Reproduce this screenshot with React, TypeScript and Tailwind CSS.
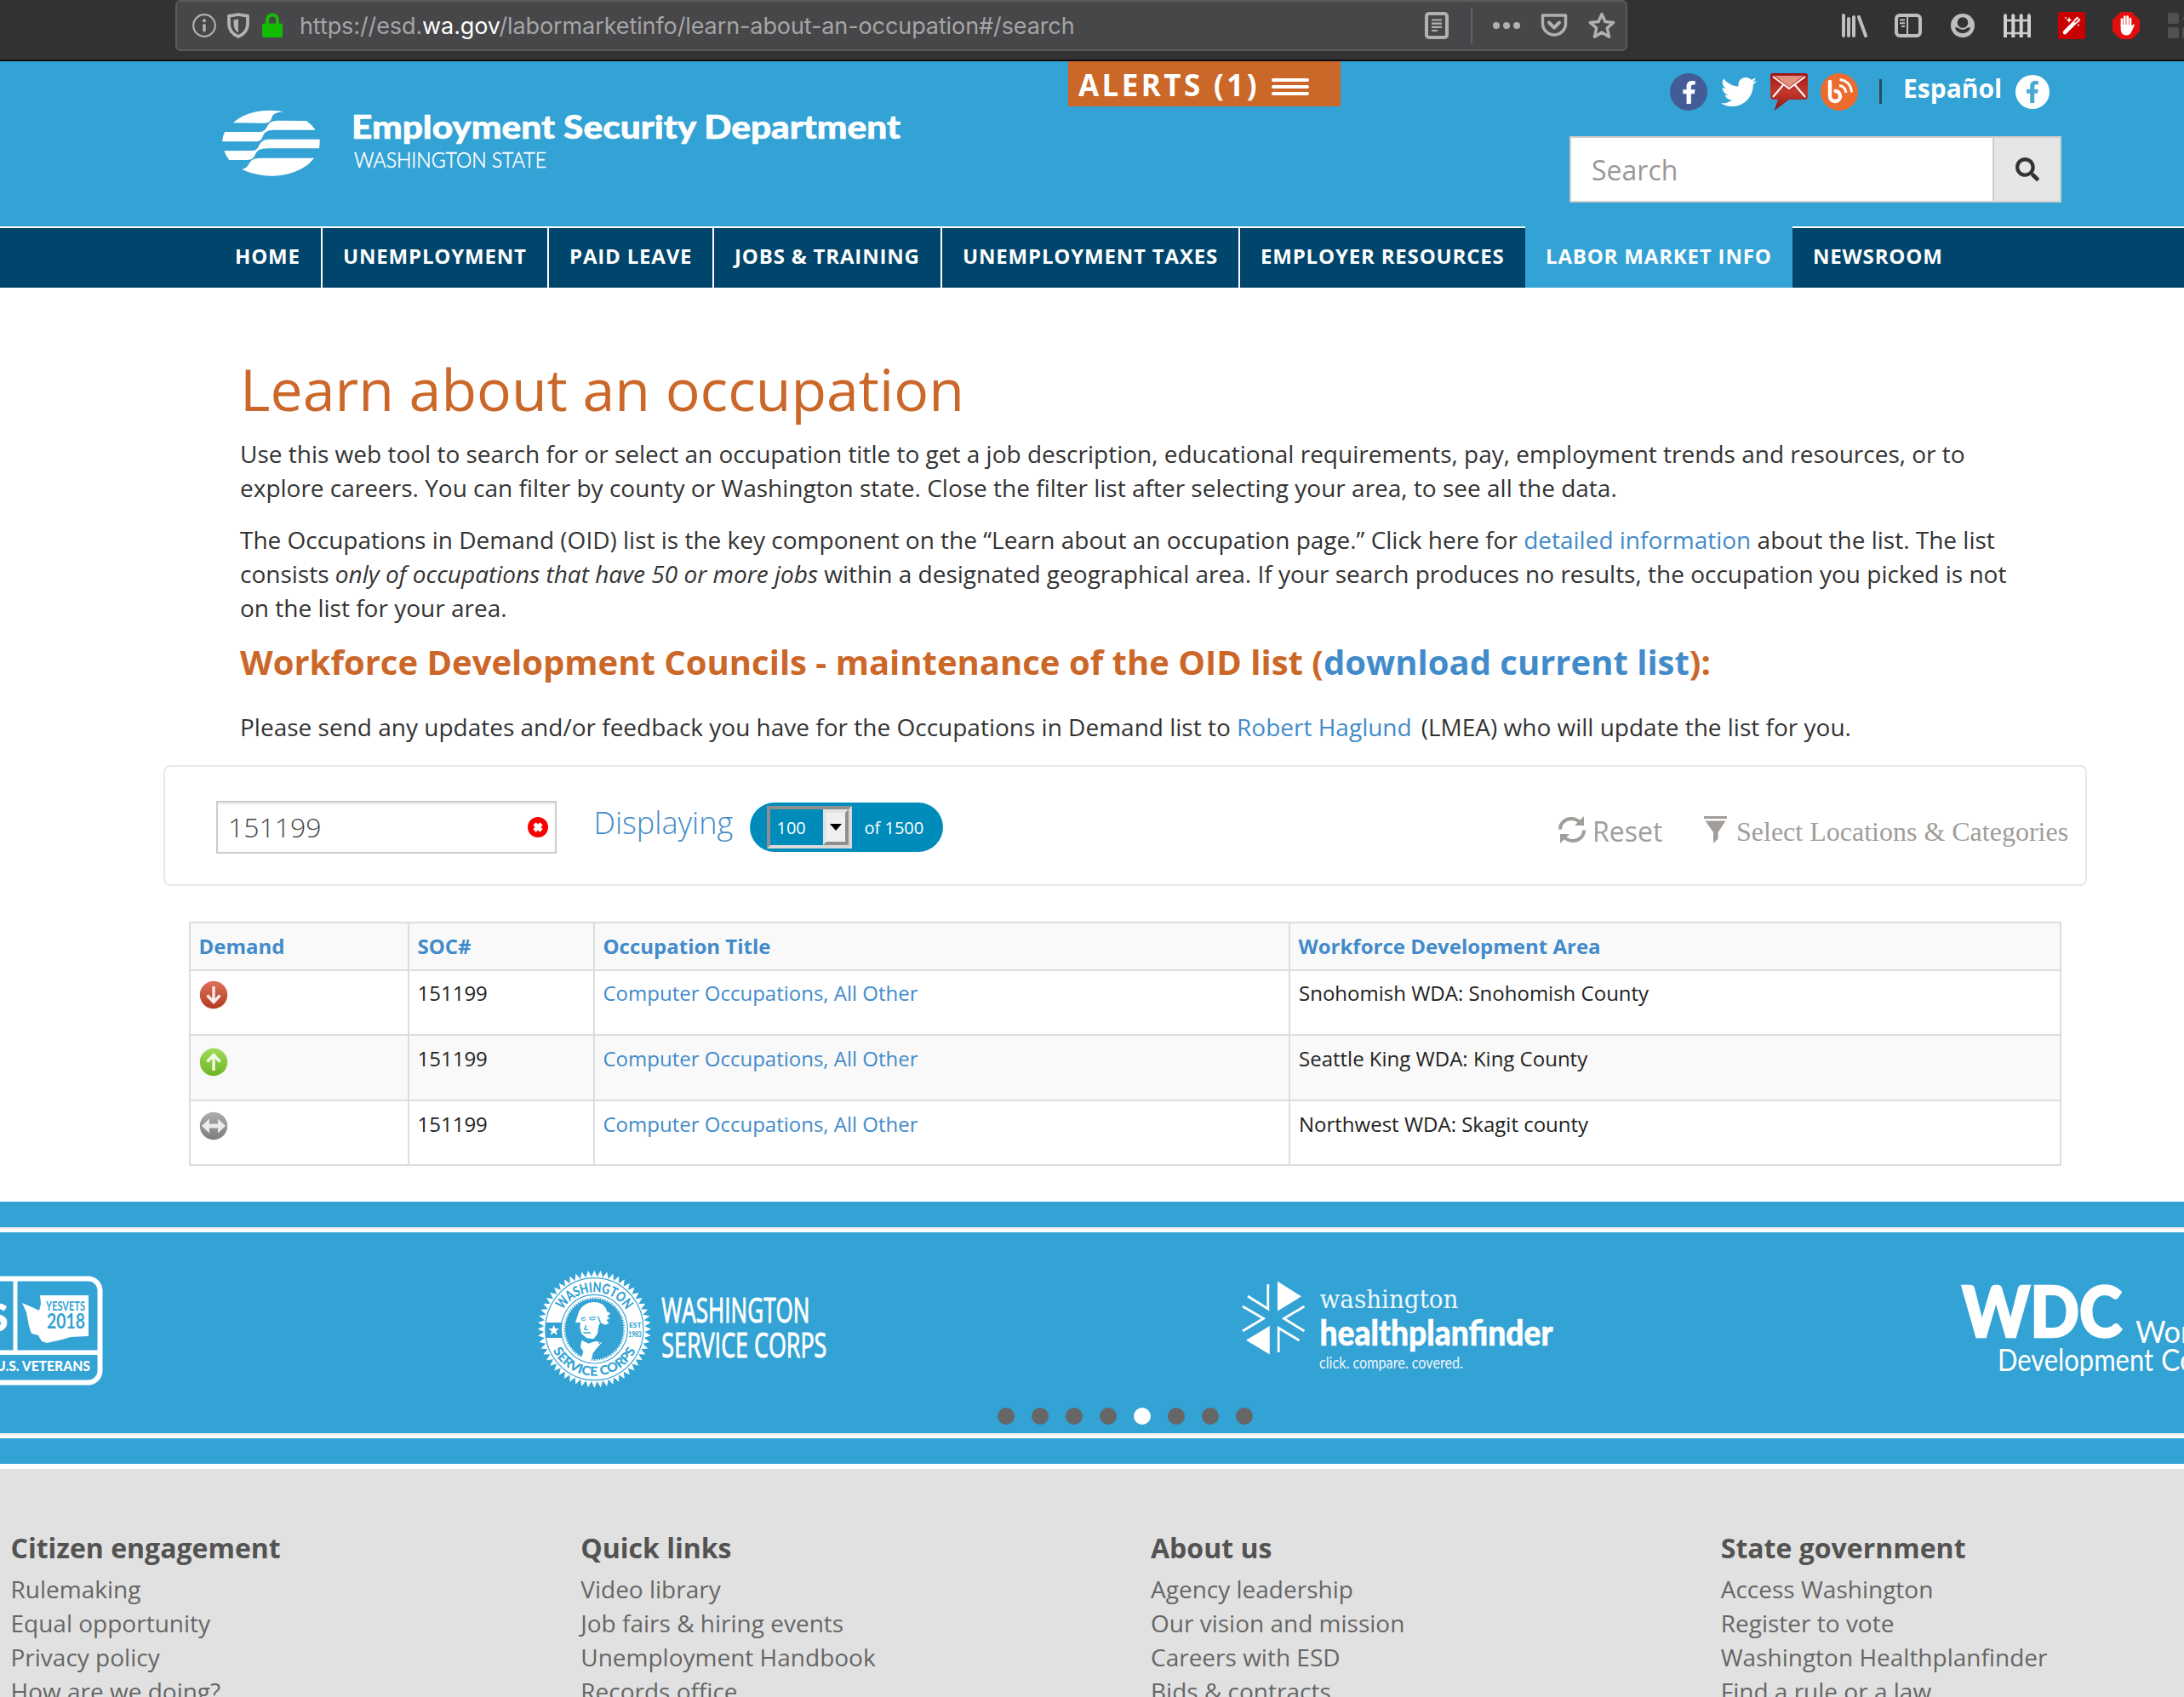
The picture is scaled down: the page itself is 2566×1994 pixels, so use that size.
import React from "react";
import { FaFacebookF, FaTwitter, FaSearch } from "react-icons/fa";

const navItems = ["HOME", "UNEMPLOYMENT", "PAID LEAVE", "JOBS & TRAINING", "UNEMPLOYMENT TAXES", "EMPLOYER RESOURCES", "LABOR MARKET INFO", "NEWSROOM"];
const navWidths = [
  "w-[127px] pl-[24px]",
  "w-[266px] pl-[24px]",
  "w-[194px] pl-[24px]",
  "w-[268px] pl-[24px]",
  "w-[350px] pl-[24px]",
  "w-[335px] pl-[24px]",
  "w-[314px] pl-[24px]",
  "w-[240px] pl-[24px]",
];

const footerColumns = [
  { title: "Citizen engagement", links: ["Rulemaking", "Equal opportunity", "Privacy policy", "How are we doing?"] },
  { title: "Quick links", links: ["Video library", "Job fairs & hiring events", "Unemployment Handbook", "Records office"] },
  { title: "About us", links: ["Agency leadership", "Our vision and mission", "Careers with ESD", "Bids & contracts"] },
  { title: "State government", links: ["Access Washington", "Register to vote", "Washington Healthplanfinder", "Find a rule or a law"] },
];

const rows = [
  { demand: "down", area: "Snohomish WDA: Snohomish County" },
  { demand: "up", area: "Seattle King WDA: King County" },
  { demand: "flat", area: "Northwest WDA: Skagit county" },
];

function BrowserBar() {
  return (
    <div className="flex h-[72px] w-full shrink-0 items-start overflow-hidden border-b-2 border-[#0c0c0d] bg-[#323234] pl-[206px]">
      <div className="flex h-[60px] w-[1706px] shrink-0 items-center rounded-[6px] border-2 border-[#5b5b5d] bg-[#474749] pl-[18px] font-['Inter',sans-serif] text-[27px]">
        <svg width="28" height="28" viewBox="0 0 28 28" className="shrink-0">
          <circle cx="14" cy="14" r="12.8" fill="none" stroke="#b1b1b3" strokeWidth="2.2" />
          <circle cx="14" cy="8.3" r="2" fill="#b1b1b3" />
          <rect x="12.2" y="12" width="3.6" height="9.5" rx="1.8" fill="#b1b1b3" />
        </svg>
        <svg width="28" height="32" viewBox="0 0 28 32" className="ml-[12px] shrink-0">
          <path d="M14 3c4 1 7 1.400 11 1.600V14c0 7-4 12-11 15C7 26 3 21 3 14V4.600C7 4.400 10 4 14 3Z" fill="none" stroke="#b1b1b3" strokeWidth="3.800" strokeLinejoin="round" />
          <path d="M14 8.500c-2 .5-4 .8-5.500 1V14c0 5 2 8 5.500 10.500Z" fill="#b1b1b3" />
        </svg>
        <svg width="26" height="30" viewBox="0 0 26 30" className="ml-[13px] shrink-0">
          <path d="M7 14V8.500a6 6 0 0 1 12 0V14" fill="none" stroke="#12bc00" strokeWidth="4" />
          <rect x="1" y="12.500" width="24" height="16.500" rx="2.500" fill="#12bc00" />
        </svg>
        <div className="ml-[19px] mt-[3px] w-[1322px] shrink-0 whitespace-nowrap tracking-[-0.1px] text-[#a5a5a7]">
          https://esd.<span className="text-white">wa.gov</span>/labormarketinfo/learn-about-an-occupation#/search
        </div>
        <svg width="28" height="32" viewBox="0 0 28 32" className="shrink-0" fill="none" stroke="#b1b1b3">
          <rect x="2" y="2" width="24" height="28" rx="3" strokeWidth="4" />
          <path d="M8 9.500h12M8 13.700h12M8 17.900h12M8 22h7" strokeWidth="2.200" />
        </svg>
        <div className="ml-[26px] h-[42px] w-[2px] shrink-0 bg-[#5f6168]" />
        <svg width="32" height="10" viewBox="0 0 32 10" className="ml-[24px] shrink-0" fill="#b1b1b3">
          <circle cx="4" cy="5" r="4" />
          <circle cx="16" cy="5" r="4" />
          <circle cx="28" cy="5" r="4" />
        </svg>
        <svg width="32" height="30" viewBox="0 0 32 30" className="ml-[24px] shrink-0" fill="none" stroke="#b1b1b3" strokeWidth="4" strokeLinecap="round" strokeLinejoin="round">
          <path d="M2.500 3h27v9.500a13.500 13.500 0 0 1-27 0Z" strokeWidth="3.500" />
          <path d="M10 11.500l6 6 6-6" />
        </svg>
        <svg width="32" height="32" viewBox="0 0 32 32" className="ml-[24px] shrink-0" fill="none" stroke="#b1b1b3" strokeWidth="3.400" strokeLinejoin="round">
          <path d="M16 2.500l3.900 9 9.800.9-7.400 6.500 2.200 10.300L16 24l-8.500 5.200 2.200-10.300-7.400-6.500 9.800-.9Z" />
        </svg>
      </div>
      <div className="flex h-[60px] shrink-0 items-center">
        <svg width="32" height="28" viewBox="0 0 32 28" className="ml-[252px] shrink-0" stroke="#bebebe" strokeWidth="4" strokeLinecap="round">
          <path d="M2 2v24M8 6v20M14 4v22M20 4l8 22" />
        </svg>
        <svg width="32" height="28" viewBox="0 0 32 28" className="ml-[30px] shrink-0" fill="none" stroke="#bebebe">
          <rect x="2" y="2" width="28" height="24" rx="4" strokeWidth="4" />
          <path d="M15 3v22M6 7.500h6M6 11.200h6M8 15h4" strokeWidth="2" />
        </svg>
        <svg width="28" height="28" viewBox="0 0 28 28" className="ml-[34px] shrink-0">
          <circle cx="14" cy="14" r="14" fill="#bebebe" />
          <circle cx="14" cy="10.500" r="6.300" fill="#323234" />
          <path d="M5 16.500c2-.6 3.500.2 5 1.200 2.500 1.300 5.500 1.300 8 0 1.500-1 3-1.800 5-1.200-1 4-4.500 6.500-9 6.500s-8-2.500-9-6.500Z" fill="#323234" />
        </svg>
        <svg width="32" height="28" viewBox="0 0 32 28" className="ml-[34px] shrink-0" stroke="#cfcfcf" fill="none">
          <path d="M2 28V3M11.300 28V3M20.700 28V3M30 28V3" strokeWidth="4" />
          <path d="M0 3l2-3 2 3M9.300 3l2-3 2 3M18.700 3l2-3 2 3M28 3l2-3 2 3" strokeWidth="1" fill="#cfcfcf" />
          <path d="M0 8h32M0 23h32" strokeWidth="2.400" />
        </svg>
        <svg width="32" height="32" viewBox="0 0 32 32" className="ml-[32px] shrink-0">
          <rect width="32" height="32" rx="2" fill="#c80000" />
          <path d="M8 24L22 10" stroke="#fff" strokeWidth="4.600" strokeLinecap="round" />
          <path d="M20 12l4-4" stroke="#c80000" strokeWidth="1.500" strokeLinecap="round" />
          <path d="M19.500 9.500l3-3 3 3-3 3" stroke="#fff" strokeWidth="1.300" fill="none" />
          <path d="M13 6l1 2.500 2.500 1-2.500 1-1 2.500-1-2.500-2.500-1 2.500-1ZM9 5.500l.5 1 1 .5-1 .5-.5 1-.5-1-1-.5 1-.5ZM24 14l.5 1 1 .5-1 .5-.5 1-.5-1-1-.5 1-.5Z" fill="#fff" />
        </svg>
        <svg width="32" height="32" viewBox="0 0 32 32" className="ml-[32px] shrink-0">
          <path d="M9.400 0h13.200L32 9.400v13.200L22.600 32H9.400L0 22.600V9.400Z" fill="#e40d0d" />
          <path d="M11 17V8.500M14.300 16V5.500M17.700 16V5.500M21 17V8" stroke="#fff" strokeWidth="2.700" strokeLinecap="round" />
          <path d="M9.700 15h12.700v2c1-1.600 2-3 3.200-2.300.6.400 0 1.600-.4 2.600L22 24c-1 2.200-3 3.500-5.500 3.500-4.500 0-6.800-3-6.800-7Z" fill="#fff" />
        </svg>
        <svg width="32" height="32" viewBox="0 0 32 32" className="ml-[33px] shrink-0" fill="#505052">
          <rect y="1" width="13" height="13" rx="2" />
          <rect y="18" width="13" height="13" rx="2" />
          <rect x="17" y="18" width="13" height="13" rx="2" />
          <path d="M17 8l6-6 6 6-6 6Z" />
        </svg>
      </div>
    </div>
  );
}

function AgencyLogo() {
  return (
    <svg width="830" height="100" viewBox="0 0 830 100" className="shrink-0" fill="#fff">
      <g transform="scale(.33333)">
        <path d="M72 73C100 45 150 28 205 29Q235 29 249 34C225 36 213 42 209 52 205 66 200 73 185 74Z" />
        <path d="M42 105L165 105C185 104 188 92 194 82 200 70 212 65 235 65L330 66Q350 80 362 98L215 98C190 99 183 106 178 117 172 132 168 138 150 139L33 139Q35 120 42 105Z" />
        <path d="M40 172L140 171C155 170 158 162 163 152 172 136 180 131 205 131L377 131Q378 148 375 163L195 163C165 164 158 170 152 180 144 198 138 203 122 204L58 204Q46 190 40 172Z" />
        <path d="M103 237C118 233 124 225 128 217 137 201 145 198 170 197L357 197C330 235 270 260 205 260 165 259 130 250 103 237Z" />
      </g>
      <text x="163" y="42.500" fontFamily="Lato" fontWeight="900" fontSize="38" stroke="#fff" strokeWidth=".6" textLength="645" lengthAdjust="spacingAndGlyphs">Employment Security Department</text>
      <text x="166" y="77" fontFamily="Lato" fontWeight="300" fontSize="24.500" stroke="#fff" strokeWidth=".5" textLength="226" lengthAdjust="spacingAndGlyphs">WASHINGTON STATE</text>
    </svg>
  );
}

function Header() {
  return (
    <header className="flex h-[194px] w-full shrink-0 items-start bg-[#33a2d4] pl-[250px]">
      <div className="mt-[48px] w-[1005px] shrink-0">
        <AgencyLogo />
      </div>
      <div className="flex h-[53px] w-[320px] shrink-0 items-center bg-[#cb6728] pl-[12px] text-white">
        <span className="mt-[1px] whitespace-nowrap text-[35px] font-bold leading-[53px] tracking-[3.4px]">ALERTS (1)</span>
        <div className="ml-[14px] mt-[6px] flex flex-col gap-[4px]">
          <div className="h-[4px] w-[44px] rounded-[2px] bg-white" />
          <div className="h-[4px] w-[44px] rounded-[2px] bg-white" />
          <div className="h-[4px] w-[44px] rounded-[2px] bg-white" />
        </div>
      </div>
      <div className="ml-[269px] flex w-[578px] shrink-0 flex-col">
        <div className="flex h-[88px] items-start pl-[118px] pt-[14px]">
          <div className="flex h-[44px] w-[44px] shrink-0 items-center justify-center rounded-full bg-[#435c98] text-white">
            <FaFacebookF size={27} />
          </div>
          <FaTwitter size={42} className="ml-[16px] mt-[1px] shrink-0 text-white" />
          <svg width="44" height="44" viewBox="0 0 44 44" className="ml-[16px] shrink-0">
            <defs>
              <linearGradient id="mail" x1="0" y1="0" x2="0" y2="1">
                <stop offset="0" stopColor="#a11515" />
                <stop offset=".5" stopColor="#c3392b" />
                <stop offset="1" stopColor="#8d1010" />
              </linearGradient>
            </defs>
            <path d="M3 0h38q3 0 3 3v24q0 4-4 4H22L4.500 44 9 31H4q-4 0-4-4V3Q0 0 3 0Z" fill="url(#mail)" />
            <path d="M5 3h34L22 16Z" fill="#e2907c" />
            <path d="M3 4l19 14L41 4M3 28l12-14M41 28L29 14" stroke="#fff" strokeWidth="2" fill="none" />
          </svg>
          <svg width="44" height="44" viewBox="0 0 44 44" className="ml-[15px] shrink-0">
            <circle cx="22" cy="22" r="22" fill="#ec6c2d" />
            <path d="M11 10v17a6 6 0 1 0 6.500-6" stroke="#fff" strokeWidth="4.400" fill="none" strokeLinecap="round" />
            <path d="M22 14.500c4.500.5 7.500 4 8 8.500M22.500 7.500c8.500 1 13.500 7 14 15" stroke="#fff" strokeWidth="3" fill="none" />
          </svg>
          <div className="ml-[25px] mt-[7px] h-[29px] w-[3px] shrink-0 bg-[#2f4a5c]" />
          <span className="ml-[25px] mt-[-2px] w-[132px] shrink-0 text-[30px] font-bold leading-[40px] text-white">Español</span>
          <div className="mt-[2px] flex h-[40px] w-[40px] shrink-0 items-center justify-center rounded-full bg-white text-[#4ba9d6]">
            <FaFacebookF size={26} />
          </div>
        </div>
        <div className="flex h-[78px] w-[578px] border-2 border-[#ccc] bg-white">
          <div className="flex-1 pl-[24px] text-[32px] leading-[75px] text-[#999]">Search</div>
          <div className="flex w-[79px] items-center justify-center border-l-2 border-[#ccc] bg-[#e6e6e6] text-[#333]">
            <FaSearch size={28} />
          </div>
        </div>
      </div>
    </header>
  );
}

function Nav() {
  return (
    <nav className="flex h-[72px] w-full shrink-0 bg-[#00456b] text-[24px] font-bold leading-[34px] tracking-[0.82px] text-white">
      <div className="w-[252px] shrink-0 border-t-2 border-white" />
      {navItems.map((item, i) => (
        <div
          key={item}
          className={`${navWidths[i]} shrink-0 whitespace-nowrap pt-[16px] ${item === "LABOR MARKET INFO" ? "border-t-2 border-[#33a2d4] bg-[#33a2d4]" : "border-t-2 border-t-white"} ${i < 5 ? "border-r-2 border-r-white" : ""}`}
        >
          {item}
        </div>
      ))}
      <div className="flex-1 border-t-2 border-white" />
    </nav>
  );
}

function Intro() {
  return (
    <section className="flex h-[561px] shrink-0 flex-col whitespace-nowrap pl-[282px] text-[28px] leading-[40px] text-[#333]">
      <h1 className="mt-[71px] h-[104px] shrink-0 text-[68px] leading-[96px] text-[#cb6728]">Learn about an occupation</h1>
      <p className="shrink-0">
        Use this web tool to search for or select an occupation title to get a job description, educational requirements, pay, employment trends and resources, or to
        <br />
        explore careers. You can filter by county or Washington state. Close the filter list after selecting your area, to see all the data.
      </p>
      <p className="mt-[21px] shrink-0">
        The Occupations in Demand (OID) list is the key component on the “Learn about an occupation page.” Click here for <a className="text-[#428bca]">detailed information</a> about the list. The list
        <br />
        consists <em>only of occupations that have 50 or more jobs</em> within a designated geographical area. If your search produces no results, the occupation you picked is not
        <br />
        on the list for your area.
      </p>
      <h2 className="mt-[18px] h-[82px] shrink-0 text-[40px] font-bold leading-[52px] text-[#cb6728]">
        Workforce Development Councils - maintenance of the OID list (<a className="text-[#428bca]">download current list</a>):
      </h2>
      <p className="shrink-0">
        Please send any updates and/or feedback you have for the Occupations in Demand list to <a className="text-[#428bca]">Robert Haglund</a>
        <span className="ml-[11px]">(LMEA) who will update the list for you.</span>
      </p>
    </section>
  );
}

function FilterPanel() {
  return (
    <section className="ml-[192px] flex h-[142px] w-[2260px] shrink-0 items-start rounded-[8px] border-2 border-[#e8e8e8] bg-white">
      <div className="ml-[60px] mt-[40px] flex h-[62px] w-[400px] shrink-0 items-center justify-between border-2 border-[#ccc] pl-[12px] pr-[8px] shadow-[inset_0_2px_2px_rgba(0,0,0,0.075)]">
        <span className="text-[32px] font-light leading-[58px] text-[#444]">151199</span>
        <svg width="24" height="24" viewBox="0 0 24 24">
          <circle cx="12" cy="12" r="12" fill="#f80000" />
          <path d="M8 8l8 8M16 8l-8 8" stroke="#fff" strokeWidth="4.600" />
        </svg>
      </div>
      <span className="ml-[43.5px] mt-[39px] w-[183.5px] shrink-0 text-[36px] font-light leading-[54px] text-[#428bca]">Displaying</span>
      <div className="mt-[42px] flex h-[58px] w-[227px] shrink-0 items-center rounded-full bg-[#008cba] pl-[20px] text-[20px] text-white">
        <div className="flex h-[50px] w-[100px] border-4 border-b-[#d9d9d9] border-l-[#8f8f8f] border-r-[#d9d9d9] border-t-[#8f8f8f]">
          <span className="flex-1 pl-[7.5px] leading-[43px]">100</span>
          <div className="flex w-[30px] items-center justify-center border-4 border-b-[#8f8f8f] border-l-[#e3e3e3] border-r-[#8f8f8f] border-t-[#e3e3e3] bg-[#efefef]">
            <svg width="14" height="8" viewBox="0 0 14 8">
              <path d="M0 0h14L7 8Z" fill="#000" />
            </svg>
          </div>
        </div>
        <span className="ml-[14.5px] leading-[43px]">of 1500</span>
      </div>
      <div className="ml-[723px] mt-[58px] flex shrink-0 items-start text-[#a09d9a]">
        <svg width="32" height="32" viewBox="0 0 32 32" fill="none" stroke="#a09d9a" strokeWidth="4">
          <path d="M2 15.500C2 8 8 3 15 3c4.500 0 8 1.800 11 5M30 16.500C30 24 24 29 17 29c-4.500 0-8-1.800-11-5" />
          <path d="M30 0v11H19ZM2 32V21h11Z" fill="#a09d9a" stroke="none" />
        </svg>
        <span className="ml-[8px] mt-[-4px] w-[131px] text-[32px] leading-[44px]">Reset</span>
        <svg width="27" height="32" viewBox="0 0 27 32" fill="#a09d9a">
          <path d="M0 0h27v3H0ZM1.500 5.500h24L16.500 19v7.500L11 32V19Z" />
        </svg>
        <span className="ml-[11px] mt-[-4px] whitespace-nowrap font-['Liberation_Serif',serif] text-[32px] leading-[44px]">Select Locations &amp; Categories</span>
      </div>
    </section>
  );
}

function DemandIcon({ kind }: { kind: string }) {
  const top = kind === "down" ? "#e0705a" : kind === "up" ? "#a2da5c" : "#adadad";
  const bottom = kind === "down" ? "#b23c22" : kind === "up" ? "#6fb422" : "#7d7d7d";
  return (
    <svg width="34" height="34" viewBox="0 0 34 34">
      <defs>
        <linearGradient id={`grad-${kind}`} x1="0" y1="0" x2="0" y2="1">
          <stop offset="0" stopColor={top} />
          <stop offset="1" stopColor={bottom} />
        </linearGradient>
      </defs>
      <circle cx="17" cy="17" r="16.200" fill={`url(#grad-${kind})`} />
      {kind === "down" && <path d="M17 7v18M9.500 17.500L17 25.500l7.500-8" stroke="#f8eeec" strokeWidth="3.400" fill="none" />}
      {kind === "up" && <path d="M17 27V9M9.500 16.500L17 8.500l7.500 8" stroke="#f3faea" strokeWidth="3.400" fill="none" />}
      {kind === "flat" && <path d="M3 17L12 8.500v6h10v-6L31 17l-9 8.500v-6H12v6Z" fill="#ececec" />}
    </svg>
  );
}

function ResultsTable() {
  return (
    <table className="ml-[222px] w-[2200px] table-fixed border-collapse border-2 border-[#ddd] text-[24px] leading-[34px]">
      <colgroup>
        <col className="w-[257px]" />
        <col className="w-[218px]" />
        <col className="w-[817px]" />
        <col />
      </colgroup>
      <thead>
        <tr className="h-[56px] bg-[#f9f9f9] text-left text-[#428bca]">
          {["Demand", "SOC#", "Occupation Title", "Workforce Development Area"].map((h) => (
            <th key={h} className="border-2 border-[#ddd] px-[9.5px] py-0 pb-[1px] font-bold">
              {h}
            </th>
          ))}
        </tr>
      </thead>
      <tbody>
        {rows.map((r, i) => {
          const pad = i === 0 ? "pt-[9px]" : "pt-[10px]";
          return (
            <tr key={r.demand} className={i === 1 ? "h-[77px] bg-[#f9f9f9]" : "h-[76px]"}>
              <td className={`border-2 border-[#ddd] px-[10px] pb-0 align-top ${i === 0 ? "pt-[11px]" : i === 1 ? "pt-[14px]" : "pt-[12px]"}`}>
                <DemandIcon kind={r.demand} />
              </td>
              <td className={`border-2 border-[#ddd] px-[9.5px] pb-0 align-top text-[#222] ${pad}`}>151199</td>
              <td className={`border-2 border-[#ddd] px-[9.5px] pb-0 align-top text-[#428bca] ${pad}`}>Computer Occupations, All Other</td>
              <td className={`border-2 border-[#ddd] px-[10px] pb-0 align-top text-[#222] ${pad}`}>{r.area}</td>
            </tr>
          );
        })}
      </tbody>
    </table>
  );
}

const BLUE = "#33a2d4";

function starburst(cx: number, cy: number, outer: number, inner: number, teeth: number) {
  const pts: string[] = [];
  for (let i = 0; i < teeth * 2; i++) {
    const a = (Math.PI * i) / teeth - Math.PI / 2;
    const r = i % 2 === 0 ? outer : inner;
    pts.push(`${(cx + r * Math.cos(a)).toFixed(1)},${(cy + r * Math.sin(a) * 1.035).toFixed(1)}`);
  }
  return pts.join(" ");
}

function YesVetsLogo() {
  return (
    <svg width="130" height="160" viewBox="0 0 130 160" className="shrink-0" fill="#fff">
      <rect x="-150" y="22.500" width="267.500" height="122" rx="14" fill="none" stroke="#fff" strokeWidth="6" />
      <path d="M15.500 22h5v88h-5ZM0 106.500h117v5.500H0Z" />
      <path d="M26 51l12 5 8 4 2-8-1-10h57v48l-21 1-10 3-18 4-6-2-4-7-8-2-3-9-3-16Z" />
      <text x="-15" y="84" fontFamily="Lato" fontWeight="900" fontSize="44" stroke="#fff" strokeWidth="1" textLength="24" lengthAdjust="spacingAndGlyphs">S</text>
      <text x="54" y="59.500" fill={BLUE} fontFamily="Lato" fontWeight="700" fontSize="15" textLength="46" lengthAdjust="spacingAndGlyphs">YESVETS</text>
      <text x="55" y="80.500" fill={BLUE} fontFamily="Lato" fontWeight="700" fontSize="24" textLength="45" lengthAdjust="spacingAndGlyphs">2018</text>
      <text x="-5" y="131" fontFamily="Lato" fontWeight="900" fontSize="17.500" textLength="111" lengthAdjust="spacingAndGlyphs">U.S. VETERANS</text>
    </svg>
  );
}

function ServiceCorpsLogo() {
  return (
    <svg width="380" height="160" viewBox="0 0 1140 480" className="ml-[490px] shrink-0" fill="#fff">
      <polygon points={starburst(235, 245, 200, 178, 56)} />
      <ellipse cx="235" cy="245" rx="173" ry="180" fill="none" stroke={BLUE} strokeWidth="3.500" />
      <ellipse cx="235" cy="245" rx="117" ry="121" fill="none" stroke={BLUE} strokeWidth="3.500" />
      <ellipse cx="235" cy="245" rx="108" ry="112" fill={BLUE} />
      <ellipse cx="235" cy="245" rx="106" ry="110" fill="none" stroke="#fff" strokeWidth="7" strokeDasharray="5 4" />
      <path d="M64 222h56v54H64Z" fill={BLUE} />
      <path d="M92 230l5 13h14l-11 9 4 14-12-8-12 8 4-14-11-9h14Z" />
      <path id="seal-top" d="M105 245a130 130 0 0 1 260 0" fill="none" />
      <path id="seal-bottom" d="M71 245a164 165 0 0 0 328 0" fill="none" />
      <g fill={BLUE} fontFamily="Lato" fontWeight="900">
        <text textAnchor="middle" fontSize="49">
          <textPath href="#seal-top" startOffset="50%" textLength="268" lengthAdjust="spacingAndGlyphs">WASHINGTON</textPath>
        </text>
        <text textAnchor="middle" fontSize="45">
          <textPath href="#seal-bottom" startOffset="50%" textLength="360" lengthAdjust="spacingAndGlyphs">SERVICE CORPS</textPath>
        </text>
        <text x="357" y="241" fontSize="25" textLength="44" lengthAdjust="spacingAndGlyphs">EST</text>
        <text x="355" y="272" fontSize="29" textLength="46" lengthAdjust="spacingAndGlyphs">1983</text>
      </g>
      <path d="M176 198C182 168 205 150 235 150 258 150 275 162 280 184L292 190 280 200 290 208 278 212 286 226 272 230 256 222 250 234 246 262 232 280 208 277 190 262 184 238 186 222 168 222Z" />
      <path d="M190 284L214 296 238 288 262 292 244 312 230 330 224 358 188 352 196 324 186 308Z" />
      <path d="M188 208l14-4M216 206l24-3M206 232l-6 14 12 2M196 258h26M248 200l8 22M250 296l12-10" stroke={BLUE} strokeWidth="4" fill="none" />
      <path d="M189 212q8 5 16 0M218 211q10 5 20-1" stroke={BLUE} strokeWidth="3" fill="none" />
      <g fontFamily="'Open Sans'" fontWeight="400" stroke="#fff" strokeWidth="3">
        <text x="472" y="222" fontSize="118" textLength="522" lengthAdjust="spacingAndGlyphs">WASHINGTON</text>
        <text x="472" y="346" fontSize="118" textLength="582" lengthAdjust="spacingAndGlyphs">SERVICE CORPS</text>
      </g>
    </svg>
  );
}

function HealthplanLogo() {
  return (
    <svg width="400" height="160" viewBox="0 0 400 160" className="ml-[440px] shrink-0" fill="#fff">
      <path d="M61 25.500L89 43.300 61 60.500ZM51.800 78V111.500L24 94.700Z" />
      <path d="M26 43L49.800 58V29M20 55L44.500 69.300 20 84M92.500 55L68.500 69.300 92.500 84M86.500 95L62.200 80.500V109" fill="none" stroke="#fff" strokeWidth="2.800" />
      <text x="110.500" y="57" fontFamily="'DejaVu Serif'" fontSize="29" textLength="163" lengthAdjust="spacingAndGlyphs" opacity=".92">washington</text>
      <text x="110.500" y="100.500" fontFamily="Lato" fontWeight="900" fontSize="41" stroke="#fff" strokeWidth=".6" textLength="274" lengthAdjust="spacingAndGlyphs">healthplanfinder</text>
      <text x="110" y="127.500" fontFamily="Lato" fontSize="18.500" textLength="169" lengthAdjust="spacingAndGlyphs" opacity=".92">click. compare. covered.</text>
    </svg>
  );
}

function WdcLogo() {
  return (
    <svg width="276" height="160" viewBox="0 0 276 160" className="ml-[450px] shrink-0" fill="#fff">
      <text x="15" y="90.500" fontFamily="Lato" fontWeight="900" fontSize="81" stroke="#fff" strokeWidth="2.500" textLength="188" lengthAdjust="spacingAndGlyphs">WDC</text>
      <text x="219" y="97.500" fontFamily="Lato" fontSize="36" textLength="160" lengthAdjust="spacingAndGlyphs">Workforce</text>
      <text x="57" y="130.500" fontFamily="Lato" fontSize="36" textLength="183" lengthAdjust="spacingAndGlyphs">Development</text>
      <text x="249" y="130.500" fontFamily="Lato" fontSize="36" textLength="110" lengthAdjust="spacingAndGlyphs">Council</text>
    </svg>
  );
}

function PartnerCarousel() {
  return (
    <section className="mt-[42px] flex w-full shrink-0 flex-col bg-[#33a2d4]">
      <div className="mt-[30px] h-[6px] border-t-2 border-[#eee] bg-white" />
      <div className="flex h-[236px] flex-col">
        <div className="mt-[32px] flex h-[160px] overflow-hidden">
          <YesVetsLogo />
          <ServiceCorpsLogo />
          <HealthplanLogo />
          <WdcLogo />
        </div>
        <div className="mt-[14px] flex gap-[20px] pl-[1172px]">
          {[0, 1, 2, 3, 4, 5, 6, 7].map((i) => (
            <div key={i} className={`h-[20px] w-[20px] rounded-full ${i === 4 ? "bg-white" : "bg-[#666]"}`} />
          ))}
        </div>
      </div>
      <div className="mb-[30px] h-[6px] border-t-2 border-[#eee] bg-white" />
    </section>
  );
}

function Footer() {
  return (
    <footer className="flex h-[274px] w-full shrink-0 overflow-hidden border-t-[6px] border-white bg-[#e1e1e1] pl-[12.5px] pt-[69px]">
      {footerColumns.map((c) => (
        <div key={c.title} className="w-[669.75px] shrink-0">
          <h3 className="h-[52px] text-[32px] font-bold leading-[48px] text-[#535351]">{c.title}</h3>
          <ul className="whitespace-nowrap text-[28px] leading-[40px] text-[#666]">
            {c.links.map((l) => (
              <li key={l}>{l}</li>
            ))}
          </ul>
        </div>
      ))}
    </footer>
  );
}

export default function App() {
  return (
    <div className="flex h-[1994px] w-full flex-col overflow-hidden bg-white font-['Open_Sans',sans-serif]">
      <BrowserBar />
      <Header />
      <Nav />
      <Intro />
      <FilterPanel />
      <div className="mt-[42px] h-[287px] shrink-0">
        <ResultsTable />
      </div>
      <PartnerCarousel />
      <Footer />
    </div>
  );
}
